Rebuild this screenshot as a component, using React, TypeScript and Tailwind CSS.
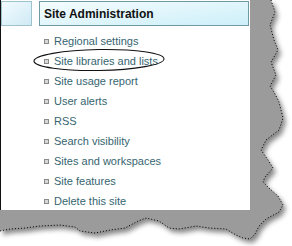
import React from "react";

const items = [
  "Regional settings",
  "Site libraries and lists",
  "Site usage report",
  "User alerts",
  "RSS",
  "Search visibility",
  "Sites and workspaces",
  "Site features",
  "Delete this site",
];

const edge =
  "250,0 271,0 275,12 270,25 274,40 278,50 271,62 276,75 270,86 274,92 279,102 283,118 279,130 266,140 261,150 268,160 273,168 265,177 263,182 269,188 278,196 283,205 279,212 266,219 259,226 255,234 250,239 243,238 236,235 226,229 209,228 196,226 179,229 169,228 159,221 146,218 138,221 125,228 110,230 95,233 80,231 75,227 60,225 40,226 25,228 10,229 0,231";

function TornShadow() {
  return (
    <svg
      className="absolute inset-0 pointer-events-none"
      width="292"
      height="246"
      viewBox="0 0 292 246"
    >
      <defs>
        <filter id="blur" x="-20%" y="-20%" width="140%" height="140%">
          <feGaussianBlur stdDeviation="2.5" />
        </filter>
      </defs>
      <polygon
        points={`0,0 ${edge}`}
        fill="#555"
        opacity="0.7"
        transform="translate(3,4)"
        filter="url(#blur)"
      />
      <polygon points={`0,0 ${edge}`} fill="#9b9b9b" />
      <polyline
        points={edge.split(" ").slice(1).join(" ")}
        fill="none"
        stroke="#000"
        strokeWidth="1"
        strokeDasharray="1 2"
      />
    </svg>
  );
}

export default function App() {
  return (
    <div
      className="relative w-[292px] h-[246px] bg-white overflow-hidden"
      style={{ fontFamily: '"Liberation Sans", Arial, sans-serif' }}
    >
      <TornShadow />
      <div className="relative w-[250px] h-[210px] bg-white border-l border-[#111] pt-px flex flex-col">
        <div className="flex gap-[7px] h-[25px]">
          <div className="w-[31px] h-[25px] border border-[#9fc2cd] bg-gradient-to-br from-[#f2fbfe] to-[#cfeaf5]" />
          <div className="w-[210px] h-[25px] border border-[#6f9aa5] bg-gradient-to-br from-[#f4fcfe] to-[#cdeff9] flex items-center pl-[4px]">
            <span className="text-[12px] font-bold text-[#111] leading-none">
              Site Administration
            </span>
          </div>
        </div>
        <ul className="mt-[5px] pl-[43px] flex flex-col">
          {items.map((t) => (
            <li key={t} className="flex items-center gap-[5px] h-[20px]">
              <span className="w-[5px] h-[5px] border border-[#8a8a8a] bg-[#d8d8d8] shrink-0" />
              <span className="text-[11px] leading-[20px] text-[#356570]">{t}</span>
            </li>
          ))}
        </ul>
        <svg
          className="absolute left-0 top-0 pointer-events-none"
          width="250"
          height="210"
          viewBox="0 0 250 210"
        >
          <ellipse
            cx="98"
            cy="60"
            rx="65"
            ry="10.5"
            fill="none"
            stroke="#111"
            strokeWidth="1.1"
            transform="rotate(-1 98 60)"
          />
        </svg>
      </div>
    </div>
  );
}
